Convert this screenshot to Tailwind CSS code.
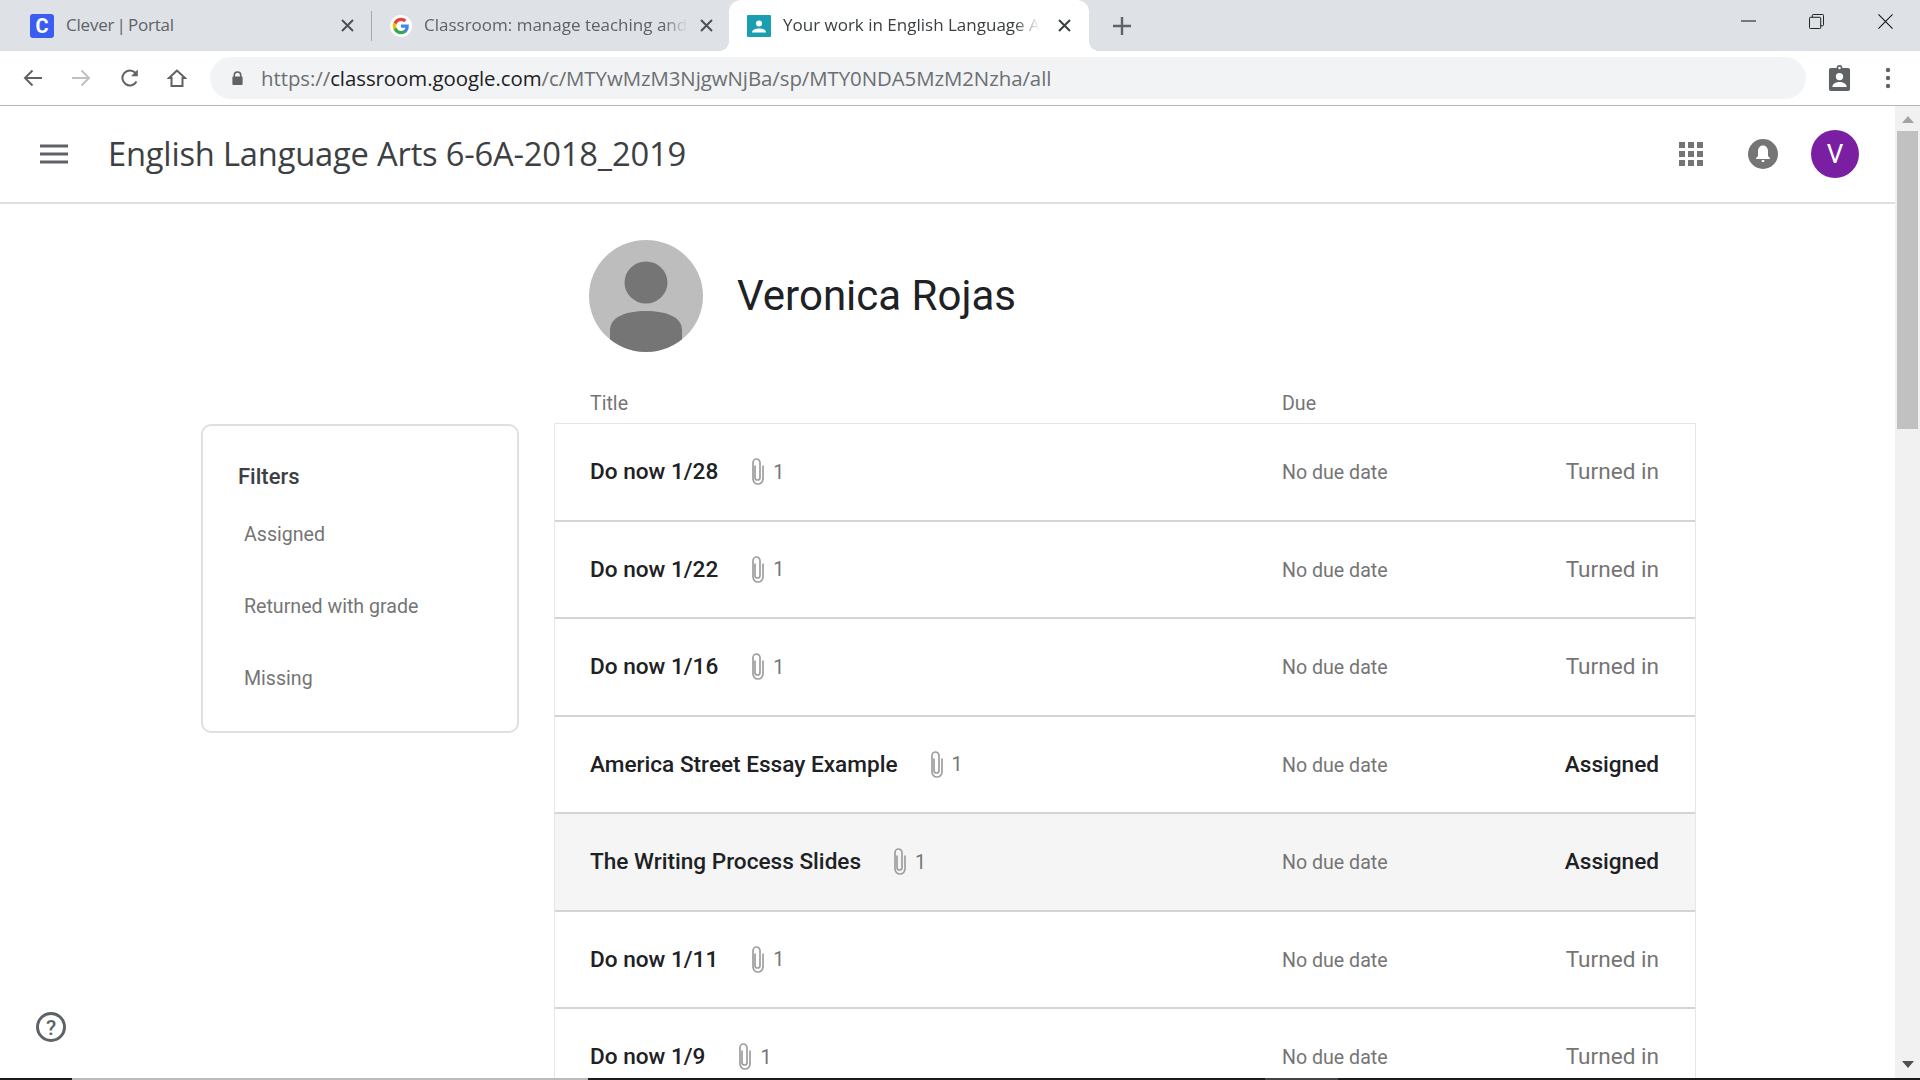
<!DOCTYPE html>
<html lang="en">
<head>
<meta charset="UTF-8">
<title>Your work in English Language Arts</title>
<script src="https://cdn.jsdelivr.net/npm/@tailwindcss/browser@4"></script>
</head>
<body class="w-[1920px] h-[1080px] overflow-hidden bg-white font-['Roboto',sans-serif] flex flex-col relative">

<!-- tab strip -->
<div class="h-[51px] bg-[#dee1e6] flex items-end shrink-0 font-['Open_Sans',sans-serif] text-[17px] text-[#5f6368]">
  <div class="w-[371px] h-[51px] flex items-center pl-[30px] pr-[17px]">
    <div class="w-[24px] h-[24px] rounded-[3px] bg-[#3b5cf0] text-white text-[20px] font-bold flex items-center justify-center font-['Roboto',sans-serif]">C</div>
    <span class="ml-[12px] flex-1 -mt-[2px] [word-spacing:-2px] tracking-[-.2px]">Clever | Portal</span>
    <svg class="w-[13px] h-[13px]" viewBox="0 0 13 13"><path d="M1 1l11 11M12 1L1 12" stroke="#4d5156" stroke-width="2"/></svg>
  </div>
  <div class="w-[1px] h-[30px] bg-[#a9abae] mb-[10px]"></div>
  <div class="w-[357px] h-[51px] flex items-center pl-[18px] pr-[16px]">
    <svg class="w-[22px] h-[22px] shrink-0" viewBox="0 0 48 48"><circle cx="24" cy="24" r="24" fill="#fff"/><path fill="#4285f4" d="M41 24.500c0-1.300-.1-2.500-.3-3.700H24v7h9.600c-.4 2.200-1.700 4.100-3.500 5.400v4.500h5.700C39.100 34.600 41 30 41 24.500z"/><path fill="#34a853" d="M24 42c4.800 0 8.800-1.600 11.800-4.300l-5.700-4.500c-1.600 1.100-3.600 1.700-6.100 1.700-4.600 0-8.600-3.100-10-7.400H8.100v4.600C11 37.900 17 42 24 42z"/><path fill="#fbbc05" d="M14 27.500c-.4-1.100-.6-2.300-.6-3.500s.2-2.400.6-3.500v-4.600H8.100C6.800 18.300 6 21 6 24s.8 5.700 2.100 8.100l5.900-4.600z"/><path fill="#ea4335" d="M24 13.100c2.600 0 5 .9 6.800 2.700l5.100-5.100C32.800 7.800 28.800 6 24 6 17 6 11 10.100 8.100 15.900l5.900 4.600c1.400-4.300 5.400-7.400 10-7.400z"/></svg>
    <span class="ml-[12px] -mt-[2px] w-[266px] whitespace-nowrap [mask-image:linear-gradient(to_right,black_90%,transparent_99%)]">Classroom: manage teaching and</span>
    <svg class="ml-auto w-[13px] h-[13px]" viewBox="0 0 13 13"><path d="M1 1l11 11M12 1L1 12" stroke="#4d5156" stroke-width="2"/></svg>
  </div>
  <div class="w-[360px] h-[51px] bg-white rounded-t-[12px] flex items-center pl-[18px] pr-[18px] text-[#3c4043] relative">
    <div class="absolute -left-[10px] bottom-0 w-[10px] h-[10px] bg-[radial-gradient(circle_at_0_0,transparent_10px,white_10px)]"></div>
    <div class="absolute -right-[10px] bottom-0 w-[10px] h-[10px] bg-[radial-gradient(circle_at_100%_0,transparent_10px,white_10px)]"></div>
    <svg class="w-[24px] h-[22px] shrink-0" viewBox="0 0 24 22"><rect width="24" height="22" rx="1" fill="#1a9fb0"/><circle cx="12" cy="8.500" r="3" fill="#fff"/><path d="M5 17.500c0-3 3.500-4.100 7-4.100s7 1.100 7 4.100z" fill="#fff"/></svg>
    <span class="ml-[12px] -mt-[2px] w-[262px] whitespace-nowrap [mask-image:linear-gradient(to_right,black_88%,transparent_98%)]">Your work in English Language A</span>
    <svg class="ml-auto w-[13px] h-[13px]" viewBox="0 0 13 13"><path d="M1 1l11 11M12 1L1 12" stroke="#3c4043" stroke-width="2"/></svg>
  </div>
  <div class="h-[51px] flex items-center pl-[24px]">
    <svg class="w-[18px] h-[18px]" viewBox="0 0 18 18"><path d="M9 0v18M0 9h18" stroke="#5f6368" stroke-width="2.400"/></svg>
  </div>
  <div class="ml-auto h-[51px] flex items-start">
    <svg class="w-[15px] h-[2px] mt-[20px] mr-[53px]" viewBox="0 0 15 2"><path d="M0 1h15" stroke="#111" stroke-width="1"/></svg>
    <svg class="w-[15px] h-[15px] mt-[14px] mr-[54px]" viewBox="0 0 16 16" fill="none" stroke="#111"><rect x=".5" y="3.500" width="12" height="12" rx="1"/><path d="M3.500 3.500v-2a1 1 0 0 1 1-1h10a1 1 0 0 1 1 1v10a1 1 0 0 1-1 1h-2"/></svg>
    <svg class="w-[15px] h-[15px] mt-[14px] mr-[27px]" viewBox="0 0 16 16"><path d="M.5.500l15 15M15.500.500l-15 15" stroke="#111" stroke-width="1.100"/></svg>
  </div>
</div>

<!-- toolbar -->
<div class="h-[55px] bg-white border-b border-[#b5b5b5] flex items-center shrink-0">
  <svg class="w-[20px] h-[20px] ml-[23px]" viewBox="0 0 20 20"><path d="M19 10H2.500M9.500 2.500L2 10l7.500 7.500" fill="none" stroke="#5f6368" stroke-width="2"/></svg>
  <svg class="w-[20px] h-[20px] ml-[28px]" viewBox="0 0 20 20"><path d="M1 10h16.500M10.500 2.500L18 10l-7.500 7.500" fill="none" stroke="#bdc1c6" stroke-width="2"/></svg>
  <svg class="w-[20px] h-[20px] ml-[29px]" viewBox="0 0 20 20"><path d="M16.500 13.500A7.500 7.500 0 1 1 15.300 4.700" fill="none" stroke="#5f6368" stroke-width="2"/><path d="M17.800 1.500v6.800H11z" fill="#5f6368"/></svg>
  <svg class="w-[20px] h-[20px] ml-[27px]" viewBox="0 0 20 20"><path d="M10 2.500L2 10h2.500v8h11v-8H18z" fill="none" stroke="#5f6368" stroke-width="2" stroke-linejoin="miter"/></svg>
  <div class="ml-[23px] w-[1596px] h-[42px] bg-[#f1f3f4] rounded-full flex items-center pl-[21px] font-['Open_Sans',sans-serif] text-[20.400px] text-[#6b6f73] tracking-[-.05px]">
    <svg class="w-[13px] h-[16px] shrink-0" viewBox="0 0 14 16"><path d="M3.500 7V5a3.500 3.500 0 0 1 7 0v2" fill="none" stroke="#5f6368" stroke-width="1.700"/><rect x="1.500" y="6.500" width="11" height="9" rx="1" fill="#5f6368"/></svg>
    <span class="ml-[17px] mt-[1px]">https://<span class="text-[#202124]">classroom.google.com</span>/c/MTYwMzM3NjgwNjBa/sp/MTY0NDA5MzM2Nzha/all</span>
  </div>
  <svg class="w-[23px] h-[28px] ml-[22px]" viewBox="0 0 24 29"><path d="M3 4h6a3 3 0 0 1 6 0h6a2 2 0 0 1 2 2v20a2 2 0 0 1-2 2H3a2 2 0 0 1-2-2V6a2 2 0 0 1 2-2z" fill="#5f6368"/><circle cx="12" cy="4" r="1.300" fill="#fff"/><circle cx="12" cy="13" r="3.800" fill="#fff"/><path d="M4.500 24c0-3.800 4-5.400 7.500-5.400s7.500 1.600 7.500 5.400z" fill="#fff"/></svg>
  <svg class="w-[6px] h-[22px] ml-[34px]" viewBox="0 0 6 22"><circle cx="3" cy="3" r="2.200" fill="#5f6368"/><circle cx="3" cy="11" r="2.200" fill="#5f6368"/><circle cx="3" cy="19" r="2.200" fill="#5f6368"/></svg>
</div>

<!-- page below browser chrome -->
<div class="flex-1 flex min-h-0 relative">
  <div class="flex-1 min-w-0 flex flex-col">
    <header class="h-[98px] shrink-0 border-b-2 border-[#e0e0e0] flex items-center">
      <svg class="w-[28px] h-[20px] ml-[40px]" viewBox="0 0 28 20"><path d="M0 2h28M0 10h28M0 18h28" stroke="#5f6368" stroke-width="3"/></svg>
      <h1 class="ml-[40px] text-[32.700px] font-normal text-[#3c4043] font-['Open_Sans',sans-serif] tracking-[-.2px]">English Language Arts 6-6A-2018_2019</h1>
      <div class="ml-auto flex items-center">
        <svg class="w-[24px] h-[24px]" viewBox="0 0 24 24" fill="#757575"><rect width="6" height="6"/><rect x="9" width="6" height="6"/><rect x="18" width="6" height="6"/><rect y="9" width="6" height="6"/><rect x="9" y="9" width="6" height="6"/><rect x="18" y="9" width="6" height="6"/><rect y="18" width="6" height="6"/><rect x="9" y="18" width="6" height="6"/><rect x="18" y="18" width="6" height="6"/></svg>
        <svg class="w-[30px] h-[30px] ml-[45px]" viewBox="0 0 30 30"><circle cx="15" cy="15" r="15" fill="#757575"/><path d="M15 6.500c-3.200 0-5 2.500-5 5.500v5l-2 2.300v.7h14v-.7L20 17v-5c0-3-1.800-5.500-5-5.500z" fill="#fff"/><rect x="13.500" y="21" width="3" height="2" rx="1" fill="#fff"/></svg>
        <div class="w-[48px] h-[48px] rounded-full bg-[#7b1fa2] text-white text-[26px] flex items-center justify-center ml-[33px] mr-[36px]">V</div>
      </div>
    </header>

    <main class="flex-1 min-h-0 flex overflow-hidden">
      <aside class="w-[554px] shrink-0 pl-[201px] pr-[35px] pt-[220px]">
        <div class="h-[309px] border-2 border-[#e0e0e0] rounded-[10px] pl-[35px] pt-[37px]">
          <div class="text-[22px] font-medium text-[#3c4043] leading-[28px]">Filters</div>
          <ul class="mt-[29px] pl-[6px] text-[19.600px] text-[#757575] font-normal">
            <li class="h-[72px]">Assigned</li>
            <li class="h-[72px]">Returned with grade</li>
            <li>Missing</li>
          </ul>
        </div>
      </aside>
      <section class="w-[1142px] shrink-0">
        <div class="flex items-center pt-[36px] pl-[35px] pb-[35px]">
          <svg class="w-[114px] h-[112px] shrink-0" viewBox="0 0 114 112"><defs><clipPath id="av"><ellipse cx="57" cy="56" rx="57" ry="56"/></clipPath></defs><ellipse cx="57" cy="56" rx="57" ry="56" fill="#bdbdbd"/><g clip-path="url(#av)" fill="#757575"><ellipse cx="57" cy="42.500" rx="21.500" ry="21"/><path d="M21 112V90c0-13 16-19 36-19s36 6 36 19v22z"/></g></svg>
          <div class="ml-[34px] -mt-[2px] text-[42px] text-[#202124] font-normal">Veronica Rojas</div>
        </div>
        <div class="h-[36px] flex items-center text-[19.600px] text-[#757575]">
          <span class="ml-[36px] w-[692px] -mt-[2px]">Title</span><span class="-mt-[2px]">Due</span>
        </div>
        <div class="border-x border-t border-[#e6e6e6]">
          <div class="h-[97.500px] border-b-2 border-[#d4d4d4] flex items-center pl-[35px] pr-[36px]">
            <span class="text-[22.600px] font-medium text-[#202124] mt-[1px]">Do now 1/28</span>
            <svg class="w-[15px] h-[28px] ml-[32px] mt-[1px]" viewBox="0 0 14 28"><path d="M4.500 7.500v12a2.500 2.500 0 0 0 5 0V4.500a3.500 3.500 0 0 0-7 0v16.500a5 5 0 0 0 10 0V7.500" fill="none" stroke="#9e9e9e" stroke-width="1.700"/></svg>
            <span class="ml-[8px] text-[19.600px] text-[#757575] mt-[1px]">1</span>
            <span class="ml-auto w-[268px] text-[19.600px] text-[#757575] mt-[2px]">No due date</span>
            <span class="w-[109px] text-right text-[22.600px] text-[#757575] mt-[1px]">Turned in</span>
          </div>
          <div class="h-[97.500px] border-b-2 border-[#d4d4d4] flex items-center pl-[35px] pr-[36px]">
            <span class="text-[22.600px] font-medium text-[#202124] mt-[1px]">Do now 1/22</span>
            <svg class="w-[15px] h-[28px] ml-[32px] mt-[1px]" viewBox="0 0 14 28"><path d="M4.500 7.500v12a2.500 2.500 0 0 0 5 0V4.500a3.500 3.500 0 0 0-7 0v16.500a5 5 0 0 0 10 0V7.500" fill="none" stroke="#9e9e9e" stroke-width="1.700"/></svg>
            <span class="ml-[8px] text-[19.600px] text-[#757575] mt-[1px]">1</span>
            <span class="ml-auto w-[268px] text-[19.600px] text-[#757575] mt-[2px]">No due date</span>
            <span class="w-[109px] text-right text-[22.600px] text-[#757575] mt-[1px]">Turned in</span>
          </div>
          <div class="h-[97.500px] border-b-2 border-[#d4d4d4] flex items-center pl-[35px] pr-[36px]">
            <span class="text-[22.600px] font-medium text-[#202124] mt-[1px]">Do now 1/16</span>
            <svg class="w-[15px] h-[28px] ml-[32px] mt-[1px]" viewBox="0 0 14 28"><path d="M4.500 7.500v12a2.500 2.500 0 0 0 5 0V4.500a3.500 3.500 0 0 0-7 0v16.500a5 5 0 0 0 10 0V7.500" fill="none" stroke="#9e9e9e" stroke-width="1.700"/></svg>
            <span class="ml-[8px] text-[19.600px] text-[#757575] mt-[1px]">1</span>
            <span class="ml-auto w-[268px] text-[19.600px] text-[#757575] mt-[2px]">No due date</span>
            <span class="w-[109px] text-right text-[22.600px] text-[#757575] mt-[1px]">Turned in</span>
          </div>
          <div class="h-[97.500px] border-b-2 border-[#d4d4d4] flex items-center pl-[35px] pr-[36px]">
            <span class="text-[22.600px] font-medium text-[#202124] mt-[1px]">America Street Essay Example</span>
            <svg class="w-[15px] h-[28px] ml-[31px] mt-[1px]" viewBox="0 0 14 28"><path d="M4.500 7.500v12a2.500 2.500 0 0 0 5 0V4.500a3.500 3.500 0 0 0-7 0v16.500a5 5 0 0 0 10 0V7.500" fill="none" stroke="#9e9e9e" stroke-width="1.700"/></svg>
            <span class="ml-[8px] text-[19.600px] text-[#757575] mt-[1px]">1</span>
            <span class="ml-auto w-[268px] text-[19.600px] text-[#757575] mt-[2px]">No due date</span>
            <span class="w-[109px] text-right text-[22.600px] font-medium text-[#202124] mt-[1px]">Assigned</span>
          </div>
          <div class="h-[97.500px] border-b-2 border-[#d4d4d4] bg-[#f5f5f5] flex items-center pl-[35px] pr-[36px]">
            <span class="text-[22.600px] font-medium text-[#202124] mt-[1px]">The Writing Process Slides</span>
            <svg class="w-[15px] h-[28px] ml-[31px] mt-[1px]" viewBox="0 0 14 28"><path d="M4.500 7.500v12a2.500 2.500 0 0 0 5 0V4.500a3.500 3.500 0 0 0-7 0v16.500a5 5 0 0 0 10 0V7.500" fill="none" stroke="#9e9e9e" stroke-width="1.700"/></svg>
            <span class="ml-[8px] text-[19.600px] text-[#757575] mt-[1px]">1</span>
            <span class="ml-auto w-[268px] text-[19.600px] text-[#757575] mt-[2px]">No due date</span>
            <span class="w-[109px] text-right text-[22.600px] font-medium text-[#202124] mt-[1px]">Assigned</span>
          </div>
          <div class="h-[97.500px] border-b-2 border-[#d4d4d4] flex items-center pl-[35px] pr-[36px]">
            <span class="text-[22.600px] font-medium text-[#202124] mt-[1px]">Do now 1/11</span>
            <svg class="w-[15px] h-[28px] ml-[32px] mt-[1px]" viewBox="0 0 14 28"><path d="M4.500 7.500v12a2.500 2.500 0 0 0 5 0V4.500a3.500 3.500 0 0 0-7 0v16.500a5 5 0 0 0 10 0V7.500" fill="none" stroke="#9e9e9e" stroke-width="1.700"/></svg>
            <span class="ml-[8px] text-[19.600px] text-[#757575] mt-[1px]">1</span>
            <span class="ml-auto w-[268px] text-[19.600px] text-[#757575] mt-[2px]">No due date</span>
            <span class="w-[109px] text-right text-[22.600px] text-[#757575] mt-[1px]">Turned in</span>
          </div>
          <div class="h-[97.500px] border-b-2 border-[#d4d4d4] flex items-center pl-[35px] pr-[36px]">
            <span class="text-[22.600px] font-medium text-[#202124] mt-[1px]">Do now 1/9</span>
            <svg class="w-[15px] h-[28px] ml-[32px] mt-[1px]" viewBox="0 0 14 28"><path d="M4.500 7.500v12a2.500 2.500 0 0 0 5 0V4.500a3.500 3.500 0 0 0-7 0v16.500a5 5 0 0 0 10 0V7.500" fill="none" stroke="#9e9e9e" stroke-width="1.700"/></svg>
            <span class="ml-[8px] text-[19.600px] text-[#757575] mt-[1px]">1</span>
            <span class="ml-auto w-[268px] text-[19.600px] text-[#757575] mt-[2px]">No due date</span>
            <span class="w-[109px] text-right text-[22.600px] text-[#757575] mt-[1px]">Turned in</span>
          </div>
        </div>
      </section>
    </main>
  </div>

  <!-- scrollbar -->
  <div class="w-[25px] shrink-0 bg-[#f1f1f1] flex flex-col items-center">
    <svg class="w-[12px] h-[7px] mt-[10px]" viewBox="0 0 12 7"><path d="M6 0l6 7H0z" fill="#a3a3a3"/></svg>
    <div class="w-[21px] h-[298px] bg-[#c1c1c1] mt-[8px]"></div>
    <svg class="w-[12px] h-[7px] mt-auto mb-[12px]" viewBox="0 0 12 7"><path d="M0 0h12L6 7z" fill="#505050"/></svg>
  </div>

  <!-- help button floats over the page -->
  <svg class="absolute left-[36px] top-[906px] w-[30px] h-[30px]" viewBox="0 0 30 30"><circle cx="15" cy="15" r="13.500" fill="none" stroke="#5f6368" stroke-width="3"/><text x="15" y="22.500" font-family="Roboto" font-size="21" font-weight="500" text-anchor="middle" fill="#5f6368">?</text></svg>
</div>

<!-- dark taskbar sliver at the very bottom -->
<div class="absolute left-0 right-0 bottom-0 h-[2px] flex">
  <div class="w-[72px] bg-[#1a1a1a]"></div>
  <div class="w-[516px] bg-[#bbbbbb]"></div>
  <div class="w-[677px] bg-[#1a1a1a]"></div>
  <div class="w-[73px] bg-[#444444]"></div>
  <div class="flex-1 bg-[#1a1a1a]"></div>
</div>
</body>
</html>
